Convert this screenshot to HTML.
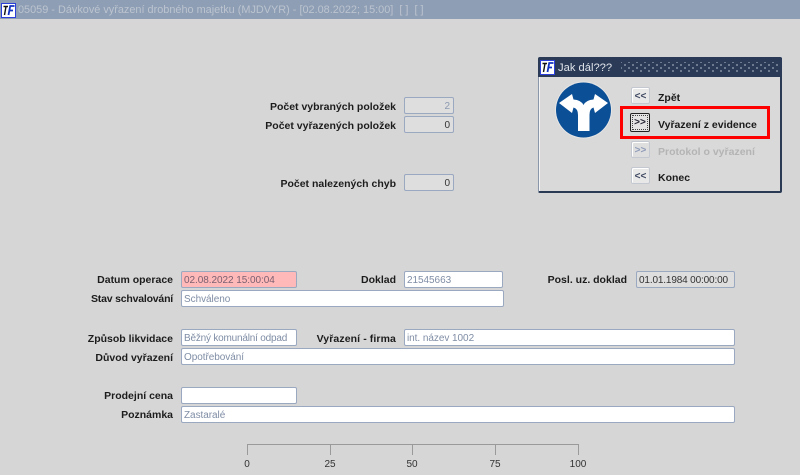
<!DOCTYPE html>
<html><head><meta charset="utf-8"><style>
html,body{margin:0;padding:0;background:#d6d6d6}
body{width:800px;height:475px;position:relative;overflow:hidden;font-family:"Liberation Sans",sans-serif;font-size:10px;color:#1a1a1a}
#w{position:absolute;left:0;top:0;width:800px;height:475px;filter:blur(.35px)}
.l{position:absolute;font-weight:bold;font-size:10.5px;line-height:14px;text-align:right;white-space:nowrap;color:#1c1c1c}
.f{position:absolute;box-sizing:border-box;background:#fff;border:1px solid #9aa8c0;border-radius:2px;font-size:10px;line-height:17px;padding-left:2px;color:#7f8da5;white-space:nowrap;overflow:hidden;letter-spacing:-.05px}
.g{background:#dedede}
.n{text-align:right;padding-right:3px;color:#333}
.b{position:absolute;box-sizing:border-box;left:631px;width:19px;height:17px;background:#e8e8e8;border:1px solid #c4c8d0;border-radius:2px;text-align:center;font-size:10px;font-weight:bold;line-height:17px;color:#3c4660;box-shadow:inset 1px 1px 0 #fff}
.t{position:absolute;left:658px;font-weight:bold;font-size:10.5px;line-height:14px;white-space:nowrap;color:#1a1a1a}
.s{position:absolute;width:40px;text-align:center;font-size:10px;line-height:12px;color:#333;top:459px}
.k{position:absolute;top:444px;width:1px;height:11px;background:#9a9a9a}
</style></head><body><div id="w">
<div style="position:absolute;left:0;top:0;width:800px;height:19px;background:#8e9eb4"></div>
<div style="position:absolute;left:18px;top:2px;font-size:10.9px;line-height:16px;color:#bcc4d0;white-space:pre">05059 - Dávkové vyřazení drobného majetku (MJDVYR) - [02.08.2022; 15:00]  [ ]  [ ]</div>
<svg style="position:absolute;left:1px;top:3px" width="15" height="15" viewBox="0 0 15 15"><rect x=".5" y=".5" width="14" height="14" fill="#fff" stroke="#2c3fd8"/><path d="M2.5 3.5H7M5 3.5L3.5 12" fill="none" stroke="#111" stroke-width="1.4"/><path d="M7.5 12L9.2 3H13.5M8.5 7.5H12" fill="none" stroke="#1030c0" stroke-width="1.8"/></svg>

<div class="l" style="right:404px;top:100px">Počet vybraných položek</div>
<div class="f g n" style="left:404px;top:97px;width:50px;height:17px;color:#8c9ab0">2</div>
<div class="l" style="right:404px;top:119px">Počet vyřazených položek</div>
<div class="f g n" style="left:404px;top:116px;width:50px;height:17px">0</div>
<div class="l" style="right:404px;top:177px">Počet nalezených chyb</div>
<div class="f g n" style="left:404px;top:174px;width:50px;height:17px">0</div>

<div class="l" style="right:627px;top:273px">Datum operace</div>
<div class="f" style="left:181px;top:271px;width:116px;height:17px;background:#ffb9b9;color:#7a6070">02.08.2022 15:00:04</div>
<div class="l" style="right:404px;top:273px">Doklad</div>
<div class="f" style="left:404px;top:271px;width:99px;height:17px">21545663</div>
<div class="l" style="right:173px;top:273px">Posl. uz. doklad</div>
<div class="f g" style="left:636px;top:271px;width:99px;height:17px;color:#333;letter-spacing:-.15px">01.01.1984 00:00:00</div>
<div class="l" style="right:627px;top:292px;letter-spacing:-.2px">Stav schvalování</div>
<div class="f" style="left:181px;top:290px;width:323px;height:17px">Schváleno</div>

<div class="l" style="right:627px;top:332px">Způsob likvidace</div>
<div class="f" style="left:181px;top:329px;width:116px;height:17px;letter-spacing:-.2px">Běžný komunální odpad</div>
<div class="l" style="right:404px;top:332px;letter-spacing:.1px">Vyřazení - firma</div>
<div class="f" style="left:404px;top:329px;width:331px;height:17px">int. název 1002</div>
<div class="l" style="right:627px;top:351px">Důvod vyřazení</div>
<div class="f" style="left:181px;top:348px;width:554px;height:17px">Opotřebování</div>

<div class="l" style="right:627px;top:389px">Prodejní cena</div>
<div class="f" style="left:181px;top:387px;width:116px;height:17px"></div>
<div class="l" style="right:627px;top:408px">Poznámka</div>
<div class="f" style="left:181px;top:406px;width:554px;height:17px">Zastaralé</div>

<div style="position:absolute;left:247px;top:444px;width:332px;height:1px;background:#9a9a9a"></div>
<div class="k" style="left:247px"></div><div class="k" style="left:330px"></div><div class="k" style="left:412px"></div><div class="k" style="left:495px"></div><div class="k" style="left:578px"></div>
<div class="s" style="left:227px">0</div><div class="s" style="left:310px">25</div><div class="s" style="left:392px">50</div><div class="s" style="left:475px">75</div><div class="s" style="left:558px">100</div>

<div style="position:absolute;box-sizing:border-box;left:538px;top:57px;width:244px;height:136px;background:#d9d9d9;border:1px solid #8a96aa;border-right:2px solid #2a3a55;border-bottom:2px solid #2a3a55;border-radius:2px"></div>
<div style="position:absolute;left:538px;top:57px;width:244px;height:20px;background:#2b3b57;border-radius:2px 2px 0 0"></div>
<div style="position:absolute;left:539px;top:77px;width:1px;height:114px;background:#f4f4f4"></div>
<div style="position:absolute;left:621px;top:62px;width:157px;height:11px;background-image:radial-gradient(circle,#7f8ba0 .8px,transparent 1.1px),radial-gradient(circle,#7f8ba0 .8px,transparent 1.1px);background-size:8px 6px;background-position:0 0,4px 3px"></div>
<svg style="position:absolute;left:540px;top:60px" width="15" height="15" viewBox="0 0 15 15"><rect x=".5" y=".5" width="14" height="14" fill="#fff" stroke="#2c3fd8"/><path d="M2.5 3.5H7M5 3.5L3.5 12" fill="none" stroke="#111" stroke-width="1.4"/><path d="M7.5 12L9.2 3H13.5M8.5 7.5H12" fill="none" stroke="#1030c0" stroke-width="1.8"/></svg>
<div style="position:absolute;left:558px;top:60px;font-size:11.2px;line-height:16px;color:#dfe3ea">Jak dál???</div>

<svg style="position:absolute;left:550px;top:78px" width="66" height="66" viewBox="550 78 66 66"><circle cx="583.5" cy="110" r="28.5" fill="#e6e6e6"/><circle cx="583.5" cy="110" r="27.5" fill="#0b4f96"/><path d="M559 103L572 94L573.5 99.500Q581 100 583.500 105Q586 100 593.500 99.500L595 94L608 103L595 113L593.500 107.500Q589.500 108.500 589.500 115L589.500 131L578 131L578 115Q578 108.500 573.500 107.500L572 113Z" fill="#fff"/></svg>

<div class="b" style="top:87px">&lt;&lt;</div>
<div class="t" style="top:91px">Zpět</div>
<div class="b" style="left:630px;top:113px;width:20px;height:19px;border:1px solid #222;background:#e4e4e4;line-height:18px;outline:1px dotted #444;outline-offset:-3px;box-shadow:none;color:#223">&gt;&gt;</div>
<div class="t" style="top:118px">Vyřazení z evidence</div>
<div class="b" style="top:141px;color:#8e9ab8;background:#dedede">&gt;&gt;</div>
<div class="t" style="top:145px;color:#b4b4b4">Protokol o vyřazení</div>
<div class="b" style="top:167px">&lt;&lt;</div>
<div class="t" style="top:171px">Konec</div>
<div style="position:absolute;box-sizing:border-box;left:620px;top:106px;width:150px;height:33px;border:3px solid #f00"></div>
</div></body></html>
